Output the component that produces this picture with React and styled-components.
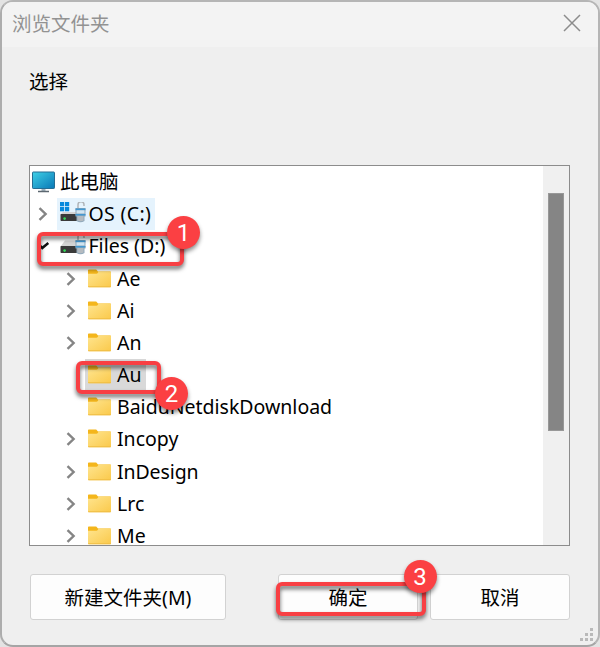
import React from "react";
import styled, { createGlobalStyle } from "styled-components";

const GlobalStyle = createGlobalStyle`
  * { box-sizing: border-box; }
  body { margin: 0; background: #e3e3e3; }
`;

const Dialog = styled.main`
  position: relative;
  display: flex;
  flex-direction: column;
  width: 600px;
  height: 647px;
  border: 2px solid #b5b5b5;
  border-left-color: #adadad;
  border-bottom-color: #a5a5a5;
  border-radius: 13px;
  background: #efefef;
  color: #000;
  font-family: "Noto Sans", "Noto Sans CJK SC", sans-serif;
  font-size: 19.5px;
  overflow: hidden;
`;

const TitleBar = styled.header`
  display: flex;
  align-items: center;
  justify-content: space-between;
  flex: none;
  height: 45px;
  padding: 0 17px 3px 10px;
  background: #f3f3f3;
`;

const Title = styled.h1`
  margin: 0;
  color: #929292;
  font-size: 19.5px;
  font-weight: 400;
  line-height: 28px;
  font-family: "Noto Sans CJK SC", sans-serif;
`;

const CloseButton = styled.button`
  display: flex;
  padding: 0;
  border: 0;
  background: none;
`;

const Prompt = styled.p`
  flex: none;
  height: 118px;
  margin: 0;
  padding: 19px 0 0 27px;
  font-family: "Noto Sans CJK SC", sans-serif;
  line-height: 30px;
`;

const TreePanel = styled.section`
  display: flex;
  flex: none;
  width: 541px;
  height: 381px;
  margin-left: 27px;
  border: 1px solid #8c8c8c;
  background: #fff;
  overflow: hidden;
`;

const Tree = styled.ul`
  flex: 1;
  margin: 0;
  padding: 0.1px 0 0;
  list-style: none;
`;

const Row = styled.li`
  display: flex;
  align-items: center;
  height: 32.17px;
  padding-left: ${({ $level }) => [2, 5, 33][$level]}px;
`;

const Toggle = styled.span`
  display: flex;
  justify-content: center;
  flex: none;
  width: 16px;
  margin-right: 6px;
`;

const Item = styled.span`
  display: flex;
  align-items: center;
  height: 32px;
  gap: ${({ $gap }) => $gap}px;
  padding: 0 4px 0 ${({ $inset }) => $inset}px;
  background: ${({ $tone }) => $tone || "transparent"};
`;

const Label = styled.span`
  line-height: 30px;
  letter-spacing: ${({ $spacing }) => $spacing || 0}px;
  white-space: nowrap;
`;

const ScrollTrack = styled.div`
  flex: none;
  width: 26px;
  padding: 27px 0 0 5px;
  background: #f0f0f0;
`;

const ScrollThumb = styled.div`
  width: 16px;
  height: 238px;
  border: 1px solid #989898;
  background: #858585;
`;

const Footer = styled.footer`
  display: flex;
  padding: 28px 0 0 28px;
`;

const Button = styled.button`
  width: ${({ $width }) => $width}px;
  height: 46px;
  margin-right: ${({ $after }) => $after || 0}px;
  padding: 2px 0 0;
  border: 1px solid #d2d2d2;
  border-radius: 3px;
  background: #fdfdfd;
  color: #000;
  font: 19.5px/28px "Noto Sans", "Noto Sans CJK SC", sans-serif;
`;

const Grip = styled.svg`
  position: absolute;
  right: 4px;
  bottom: 3px;
`;

const Callout = styled.div`
  position: absolute;
  left: ${({ $x }) => $x - 2}px;
  top: ${({ $y }) => $y - 2}px;
  width: ${({ $w }) => $w}px;
  height: ${({ $h }) => $h}px;
  border: 4px solid #f83f43;
  border-radius: 6px;
  filter: drop-shadow(0 3px 2px rgba(0, 0, 0, 0.6));
`;

const Badge = styled.div`
  position: absolute;
  left: ${({ $cx }) => $cx - 18.5}px;
  top: ${({ $cy }) => $cy - 18.5}px;
  width: 33px;
  height: 33px;
  border-radius: 50%;
  background: #fb4043;
  box-shadow: 0 3px 4px rgba(0, 0, 0, 0.45);
  color: #fff;
  font: 24px/34px Roboto, sans-serif;
  text-align: center;
`;

const Chevron = () => (
  <svg width="10" height="14" viewBox="0 0 10 14" fill="none">
    <path d="M1.5 1.2 7.6 7l-6.1 5.8" stroke="#858585" strokeWidth="2.4" />
  </svg>
);

const Check = () => (
  <svg width="15" height="10" viewBox="0 0 15 10" fill="none">
    <path d="M2 2.5l4.3 4.5 6-5" stroke="#111" strokeWidth="2.5" />
  </svg>
);

const Computer = () => (
  <svg width="23" height="22" viewBox="0 0 23 22">
    <defs>
      <linearGradient id="screen" x1="0" y1="0" x2="1" y2="1">
        <stop stopColor="#3fd0e6" />
        <stop offset="1" stopColor="#0877b6" />
      </linearGradient>
    </defs>
    <path d="M9.5 17h4v3.5h-4z" fill="#9fb0bc" />
    <path d="M6 19.8h11v1.5H6z" fill="#5c6770" />
    <rect x="0.5" y="1" width="22" height="16.5" rx="0.7" fill="url(#screen)" stroke="#256d93" />
  </svg>
);

const Drive = ({ windows }) => (
  <svg width="26" height="24" viewBox="0 0 26 24">
    {windows && (
      <path d="M0 0h4.2v4.2H0zm5 0h4.2v4.2H5zM0 5h4.2v4.2H0zm5 0h4.2v4.2H5z" fill="#0789dc" />
    )}
    <path d={windows ? "M3 10h14l2 2.5H0.5z" : "M5 6.5h12l2 6H0.5z"} fill="#d4d4d4" />
    <rect x="0.5" y="12" width="19" height="7" rx="0.7" fill="#3a3a3a" />
    <circle cx="4.6" cy="16.6" r="1.3" fill="#31d957" />
    <path d="M18 6.5V2.7a3 3 0 0 1 6 0V4" fill="none" stroke="#b0b5b9" strokeWidth="1.5" />
    <path d="M15.5 6h10v8.5h-1V19q-4 2.6-8 0v-4.5h-1z" fill="#91a9bb" />
    <path d="M15.5 6.5h10v1.7h-10zm0 5.5h10v1.5h-10z" fill="#4297d0" />
    <path d="M16.5 8.2h8v3.3h-8z" fill="#d0e5f2" />
    <path d="M17.5 14h6v4.5q-3 1.5-6 0z" fill="#b5bbc0" />
  </svg>
);

const Folder = () => (
  <svg width="23" height="20" viewBox="0 0 23 20">
    <defs>
      <linearGradient id="folder" x1="0" y1="0" x2="1" y2="1">
        <stop stopColor="#ffe58f" />
        <stop offset="1" stopColor="#fac94b" />
      </linearGradient>
    </defs>
    <path d="M0 1.3Q0 .5.8.5h7.4l1.8 2h12.2q.8 0 .8.8V6H0z" fill="#f4b61c" />
    <path d="M0 4.7h8.5q.8 0 1.400-.9L10.500 2.500H22q1 0 1 1v14q0 .7-.7.7H.7q-.7 0-.7-.7z" fill="url(#folder)" />
    <path d="M0 17.300h23q0 .9-.7.900H.7q-.7 0-.7-.9z" fill="#efbd43" />
  </svg>
);

const folders = [
  { name: "Ae", expandable: true },
  { name: "Ai", expandable: true },
  { name: "An", expandable: true },
  { name: "Au", selected: true },
  { name: "BaiduNetdiskDownload" },
  { name: "Incopy", expandable: true },
  { name: "InDesign", expandable: true, spacing: -0.1 },
  { name: "Lrc", expandable: true },
  { name: "Me", expandable: true },
];

export default function App() {
  return (
    <>
      <GlobalStyle />
      <Dialog>
        <TitleBar>
          <Title>浏览文件夹</Title>
          <CloseButton aria-label="关闭">
            <svg width="18" height="18" viewBox="0 0 18 18">
              <path d="M1 1l16 16M17 1L1 17" stroke="#8c8c8c" strokeWidth="1.5" />
            </svg>
          </CloseButton>
        </TitleBar>
        <Prompt>选择</Prompt>
        <TreePanel>
          <Tree>
            <Row $level={0}>
              <Item $gap={5} $inset={0}><Computer /><Label>此电脑</Label></Item>
            </Row>
            <Row $level={1}>
              <Toggle><Chevron /></Toggle>
              <Item $gap={2.5} $inset={3} $tone="#e5f3fd"><Drive windows /><Label $spacing={0.35}>OS (C:)</Label></Item>
            </Row>
            <Row $level={1}>
              <Toggle><Check /></Toggle>
              <Item $gap={2.5} $inset={3}><Drive /><Label>Files (D:)</Label></Item>
            </Row>
            {folders.map((folder) => (
              <Row $level={2} key={folder.name}>
                <Toggle>{folder.expandable && <Chevron />}</Toggle>
                <Item $gap={6} $inset={3} $tone={folder.selected && "#d9d9d9"}>
                  <Folder /><Label $spacing={folder.spacing}>{folder.name}</Label>
                </Item>
              </Row>
            ))}
          </Tree>
          <ScrollTrack><ScrollThumb /></ScrollTrack>
        </TreePanel>
        <Footer>
          <Button $width={196} $after={52}>新建文件夹(M)</Button>
          <Button $width={140} $after={12}>确定</Button>
          <Button $width={140}>取消</Button>
        </Footer>
        <Grip width="14" height="14" viewBox="0 0 14 14">
          <path d="M10 0h3v3h-3zM5 5h3v3H5zm5 0h3v3h-3zM0 10h3v3H0zm5 0h3v3H5zm5 0h3v3h-3z" fill="#b9b9b9" />
        </Grip>
        <Callout $x={37} $y={232} $w={147} $h={34} />
        <Badge $cx={183.5} $cy={232.5}>1</Badge>
        <Callout $x={76} $y={361} $w={85} $h={33} />
        <Badge $cx={171.5} $cy={393.5}>2</Badge>
        <Callout $x={276} $y={582} $w={150} $h={34} />
        <Badge $cx={420} $cy={576}>3</Badge>
      </Dialog>
    </>
  );
}
